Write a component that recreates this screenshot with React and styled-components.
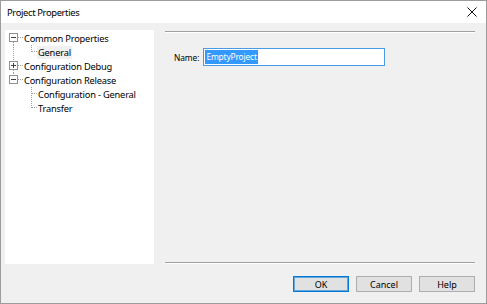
import React from "react";
import styled, { createGlobalStyle } from "styled-components";

const Global = createGlobalStyle`
  html, body { margin: 0; padding: 0; background: #ffffff; }
  body { font-family: "Noto Sans", "Segoe UI", sans-serif; }
  * { box-sizing: border-box; }
`;

const Window = styled.div`
  width: 487px;
  height: 304px;
  border: 1px solid #9c9c9c;
  display: flex;
  flex-direction: column;
  background: #f0f0f0;
  overflow: hidden;
`;

const TitleBar = styled.div`
  height: 22px;
  background: #ffffff;
  display: flex;
  align-items: center;
  justify-content: space-between;
  padding: 0 9px 0 6px;
`;

const Title = styled.span`
  font-size: 9.4px;
  letter-spacing: -0.35px;
  color: #000;
`;

const CloseIcon = styled.svg`
  display: block;
`;

const Body = styled.div`
  flex: 1;
  display: flex;
  flex-direction: column;
  padding: 7px 11px 0 4px;
`;

const Main = styled.div`
  display: flex;
  gap: 11px;
  height: 234px;
`;

const Tree = styled.div`
  width: 149px;
  background: #ffffff;
  padding-top: 1px;
  display: flex;
  flex-direction: column;
`;

const Row = styled.div`
  height: 14px;
  display: flex;
  align-items: center;
`;

const Gutter = styled.svg`
  display: block;
  flex: none;
`;

const Label = styled.span`
  font-size: 9.3px;
  letter-spacing: -0.2px;
  line-height: 13px;
  color: #000;
  padding: 0 1px;
  background: ${(p) => (p.$selected ? "#f0f0f0" : "transparent")};
  white-space: nowrap;
`;

const RightPane = styled.div`
  flex: 1;
  display: flex;
  flex-direction: column;
  margin-top: 1px;
`;

const Etched = styled.div`
  height: 2px;
  border-top: 1px solid #a0a0a0;
  border-bottom: 1px solid #ffffff;
`;

const Form = styled.div`
  flex: 1;
  padding: 15px 0 0 9px;
`;

const FieldRow = styled.div`
  display: flex;
  align-items: center;
  gap: 4px;
`;

const FieldLabel = styled.span`
  font-size: 8.4px;
  letter-spacing: -0.1px;
  color: #000;
`;

const Input = styled.div`
  width: 182px;
  height: 18px;
  border: 1px solid #4a9be6;
  background: #fff;
  display: flex;
  align-items: center;
  padding-left: 1px;
`;

const Selected = styled.span`
  background: #3399ff;
  color: #fff;
  font-size: 8.4px;
  letter-spacing: -0.15px;
  line-height: 14px;
  padding: 0 1px;
`;

const Footer = styled.div`
  margin-top: 12px;
  display: flex;
  justify-content: flex-end;
  gap: 7px;
`;

const Button = styled.div`
  width: 56px;
  height: 16px;
  background: #e1e1e1;
  border: 1px solid ${(p) => (p.$default ? "#0078d7" : "#adadad")};
  box-shadow: ${(p) => (p.$default ? "inset 0 0 0 1px rgba(0,120,215,0.55)" : "none")};
  font-size: 9px;
  color: #000;
  display: flex;
  align-items: center;
  justify-content: center;
`;

const LINE = "#a0a0a0";
const dash = { stroke: LINE, strokeWidth: 1, strokeDasharray: "1 1", shapeRendering: "crispEdges" };

function Expander({ open }) {
  return (
    <>
      <rect x={4.5} y={2.5} width={8} height={8} fill="#fff" stroke="#919191" shapeRendering="crispEdges" />
      <line x1={6} y1={6.5} x2={11} y2={6.5} stroke="#404040" shapeRendering="crispEdges" />
      {!open && <line x1={8.5} y1={4} x2={8.5} y2={9} stroke="#404040" shapeRendering="crispEdges" />}
    </>
  );
}

function RootRow({ label, open, above, below }) {
  return (
    <Row>
      <Gutter width={18} height={14} viewBox="0 0 18 14">
        {above && <line x1={8.5} y1={0} x2={8.5} y2={2} {...dash} />}
        {below && <line x1={8.5} y1={11} x2={8.5} y2={14} {...dash} />}
        <line x1={13} y1={6.5} x2={18} y2={6.5} {...dash} />
        <Expander open={open} />
      </Gutter>
      <Label>{label}</Label>
    </Row>
  );
}

function ChildRow({ label, last, rootThrough, selected }) {
  return (
    <Row>
      <Gutter width={32} height={14} viewBox="0 0 32 14">
        {rootThrough && <line x1={8.5} y1={0} x2={8.5} y2={14} {...dash} />}
        <line x1={26.5} y1={0} x2={26.5} y2={last ? 7 : 14} {...dash} />
        <line x1={27} y1={6.5} x2={32} y2={6.5} {...dash} />
      </Gutter>
      <Label $selected={selected}>{label}</Label>
    </Row>
  );
}

export default function App() {
  return (
    <>
      <Global />
      <Window>
        <TitleBar>
          <Title>Project Properties</Title>
          <CloseIcon width={10} height={10} viewBox="0 0 10 10">
            <path d="M0.5 0.5 L9.5 9.5 M9.5 0.5 L0.5 9.5" stroke="#111" strokeWidth="1" fill="none" />
          </CloseIcon>
        </TitleBar>
        <Body>
          <Main>
            <Tree>
              <RootRow label="Common Properties" open below />
              <ChildRow label="General" last rootThrough selected />
              <RootRow label="Configuration Debug" above below />
              <RootRow label="Configuration Release" open above />
              <ChildRow label="Configuration - General" />
              <ChildRow label="Transfer" last />
            </Tree>
            <RightPane>
              <Etched />
              <Form>
                <FieldRow>
                  <FieldLabel>Name:</FieldLabel>
                  <Input>
                    <Selected>EmptyProject</Selected>
                  </Input>
                </FieldRow>
              </Form>
              <Etched />
            </RightPane>
          </Main>
          <Footer>
            <Button $default>OK</Button>
            <Button>Cancel</Button>
            <Button>Help</Button>
          </Footer>
        </Body>
      </Window>
    </>
  );
}
